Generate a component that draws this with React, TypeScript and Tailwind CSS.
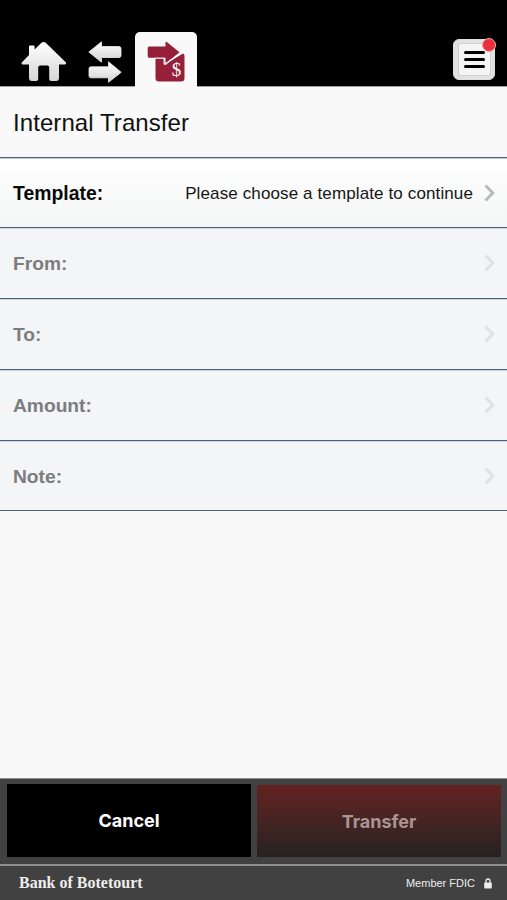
type Row = { label: string; height: string };

const disabledRows: Row[] = [
  { label: "From:", height: "h-[71px]" },
  { label: "To:", height: "h-[71px]" },
  { label: "Amount:", height: "h-[71px]" },
  { label: "Note:", height: "h-[70px]" },
];

function HomeIcon() {
  return (
    <svg width="46" height="40" viewBox="0 0 46 40" className="block">
      <defs>
        <linearGradient id="home" x1="0" y1="0" x2="0" y2="1">
          <stop offset="0" stopColor="#fff" />
          <stop offset="1" stopColor="#d6d6d6" />
        </linearGradient>
      </defs>
      <path
        fill="url(#home)"
        d="M20.5.7Q22.6-.7 24.7.7L45 20.4Q45.6 22.4 44 22.4H38V36Q38 39 35 39H30.200Q28.200 39 28.200 37V25.500Q28.200 23.500 26.200 23.500H19.200Q17.200 23.500 17.200 25.500V37Q17.200 39 15.200 39H11Q8 39 8 36V22.400H1.500Q0 22.400 .8 20.400L8 13V4.500Q8 3.600 9 3.600H12.600Q13.600 3.600 13.600 4.500V7.400Z"
      />
    </svg>
  );
}

function SwapIcon() {
  return (
    <svg width="34" height="42" viewBox="0 0 34 42" className="block">
      <defs>
        <linearGradient id="swap" x1="0" y1="0" x2="0" y2="1">
          <stop offset="0" stopColor="#fff" />
          <stop offset="1" stopColor="#d2d2d2" />
        </linearGradient>
      </defs>
      <g fill="url(#swap)" stroke="#eee" strokeWidth=".8" strokeLinejoin="round">
        <path d="M.8 11 13.500.8V5.500H31Q33 5.500 33 7.500V14.500Q33 16.500 31 16.500H13.500V21.200Z" />
        <path d="M33.200 31.300 20.500 41.300V36.800H3Q1 36.800 1 34.800V27.800Q1 25.800 3 25.800H20.500V20.800Z" />
      </g>
    </svg>
  );
}

function TransferIcon() {
  return (
    <svg width="38" height="42" viewBox="0 0 38 42" className="block">
      <path
        fill="#96203a"
        d="M8.500 17H17L17.800 23.500 36 12.500Q37.500 13 37.500 15V37Q37.500 40.500 34 40.500H12Q8.500 40.500 8.500 37Z"
      />
      <path
        fill="#96203a"
        d="M.7 7Q.7 5.500 2.200 5.500H18.500V1.500Q18.500.3 19.800 1L32.500 11.300 20 21.500Q18.500 22.200 18.500 20.500V16.800H2.200Q.7 16.800 .7 15.300Z"
      />
      <path
        d="M8 17.300H17.100V22.600Q18 24 19.500 22.500L22.500 19.800Q27 17.500 30 14.500L35 11.800"
        fill="none"
        stroke="#fff"
        strokeWidth="1.100"
        strokeLinejoin="round"
      />
      <text
        x="29.500"
        y="35"
        textAnchor="middle"
        fill="#fff"
        fontFamily="Liberation Serif, serif"
        fontSize="19"
      >
        $
      </text>
    </svg>
  );
}

function Chevron({ color }: { color: string }) {
  return (
    <svg width="12" height="19" viewBox="0 0 12 19" className={color}>
      <path d="M1.500 1.500 8.800 9 1.500 16.500" fill="none" stroke="currentColor" strokeWidth="3" />
    </svg>
  );
}

function LockIcon() {
  return (
    <svg width="8" height="11" viewBox="0 0 8 11" className="block">
      <path d="M2 5V3Q2 1 4 1Q6 1 6 3V5" fill="none" stroke="#eee" strokeWidth="1.300" />
      <rect x=".2" y="4.500" width="7.600" height="6" rx=".7" fill="#eee" />
    </svg>
  );
}

function Header() {
  return (
    <header className="flex h-[87px] shrink-0 items-end bg-gradient-to-b from-black from-[86px] to-[#a0a0a0] to-[86px] pl-[21px] pr-[12px]">
      <div className="mb-[5px] w-[67px]">
        <HomeIcon />
      </div>
      <div className="mb-[4px] w-[47px]">
        <SwapIcon />
      </div>
      <div className="flex h-[55px] w-[62px] justify-center rounded-t-[5px] bg-[#f9f9f9] pt-[9px]">
        <TransferIcon />
      </div>
      <button
        aria-label="Menu"
        className="relative mb-[7px] ml-auto flex h-[41px] w-[42px] items-center justify-center rounded-[6px] border border-[#ddd] bg-[#e2e2e2]"
      >
        <span className="flex h-[33px] w-[33px] flex-col items-center justify-center gap-[4px] rounded-[2px] border border-[#d0d0d0] bg-[#f5f5f5]">
          <span className="h-[3px] w-[21px] rounded-full bg-black" />
          <span className="h-[3px] w-[21px] rounded-full bg-black" />
          <span className="h-[3px] w-[21px] rounded-full bg-black" />
        </span>
        <span className="absolute -right-[2px] -top-[2px] h-[14px] w-[14px] rounded-full border border-[#f3a5aa] bg-[#e8303e]" />
      </button>
    </header>
  );
}

export default function App() {
  return (
    <div className="flex h-[900px] w-[507px] flex-col overflow-hidden bg-[#f9f9f9] font-['Liberation_Sans',Arial,sans-serif]">
      <Header />

      <div className="flex h-[71px] items-center border-b border-[#4b607a] pl-[13px] pt-[2px]">
        <h1 className="whitespace-nowrap text-[24px] leading-none tracking-[0.08px] text-[#111]">
          Internal Transfer
        </h1>
      </div>

      <div className="flex h-[70px] items-center border-b border-[#4b607a] border-t border-t-[#c3ceda] bg-gradient-to-b from-white to-[#f4f5f5] pl-[13px] pr-[11px]">
        <span className="pt-px text-[19.400px] font-bold text-[#0a0a0a]">Template:</span>
        <span className="ml-auto mr-[11px] whitespace-nowrap pt-[2px] text-[17px] tracking-[0.12px] text-[#151515]">
          Please choose a template to continue
        </span>
        <Chevron color="text-[#b9b9b9]" />
      </div>

      {disabledRows.map((row) => (
        <div
          key={row.label}
          className={`${row.height} flex items-center justify-between border-b border-[#4b607a] border-t border-t-[#c9d4de] bg-[#f3f5f7] pl-[13px] pr-[11px]`}
        >
          <span className="pt-[2px] text-[19.200px] font-bold text-[#7b7d7e]">{row.label}</span>
          <Chevron color="text-[#dfe1e2]" />
        </div>
      ))}

      <div className="mt-auto grid h-[86px] shrink-0 grid-cols-2 gap-[6px] border-t border-[#909090] bg-[#414141] pb-[7px] pl-[7px] pr-[6px] pt-[5px] font-['Inter',sans-serif] text-[18px] font-bold">
        <button className="bg-black text-white">Cancel</button>
        <button className="mt-px bg-gradient-to-b from-[#632121] to-[#252222] text-[#aa9494]">Transfer</button>
      </div>

      <footer className="flex h-[36px] shrink-0 items-center border-t-2 border-[#919191] bg-[#414141] pl-[19px] pr-[15px] text-[#eee]">
        <span className="whitespace-nowrap font-['Liberation_Serif',serif] text-[16px] font-bold">
          Bank of Botetourt
        </span>
        <span className="ml-auto mr-[9px] whitespace-nowrap text-[11px]">Member FDIC</span>
        <LockIcon />
      </footer>
    </div>
  );
}
